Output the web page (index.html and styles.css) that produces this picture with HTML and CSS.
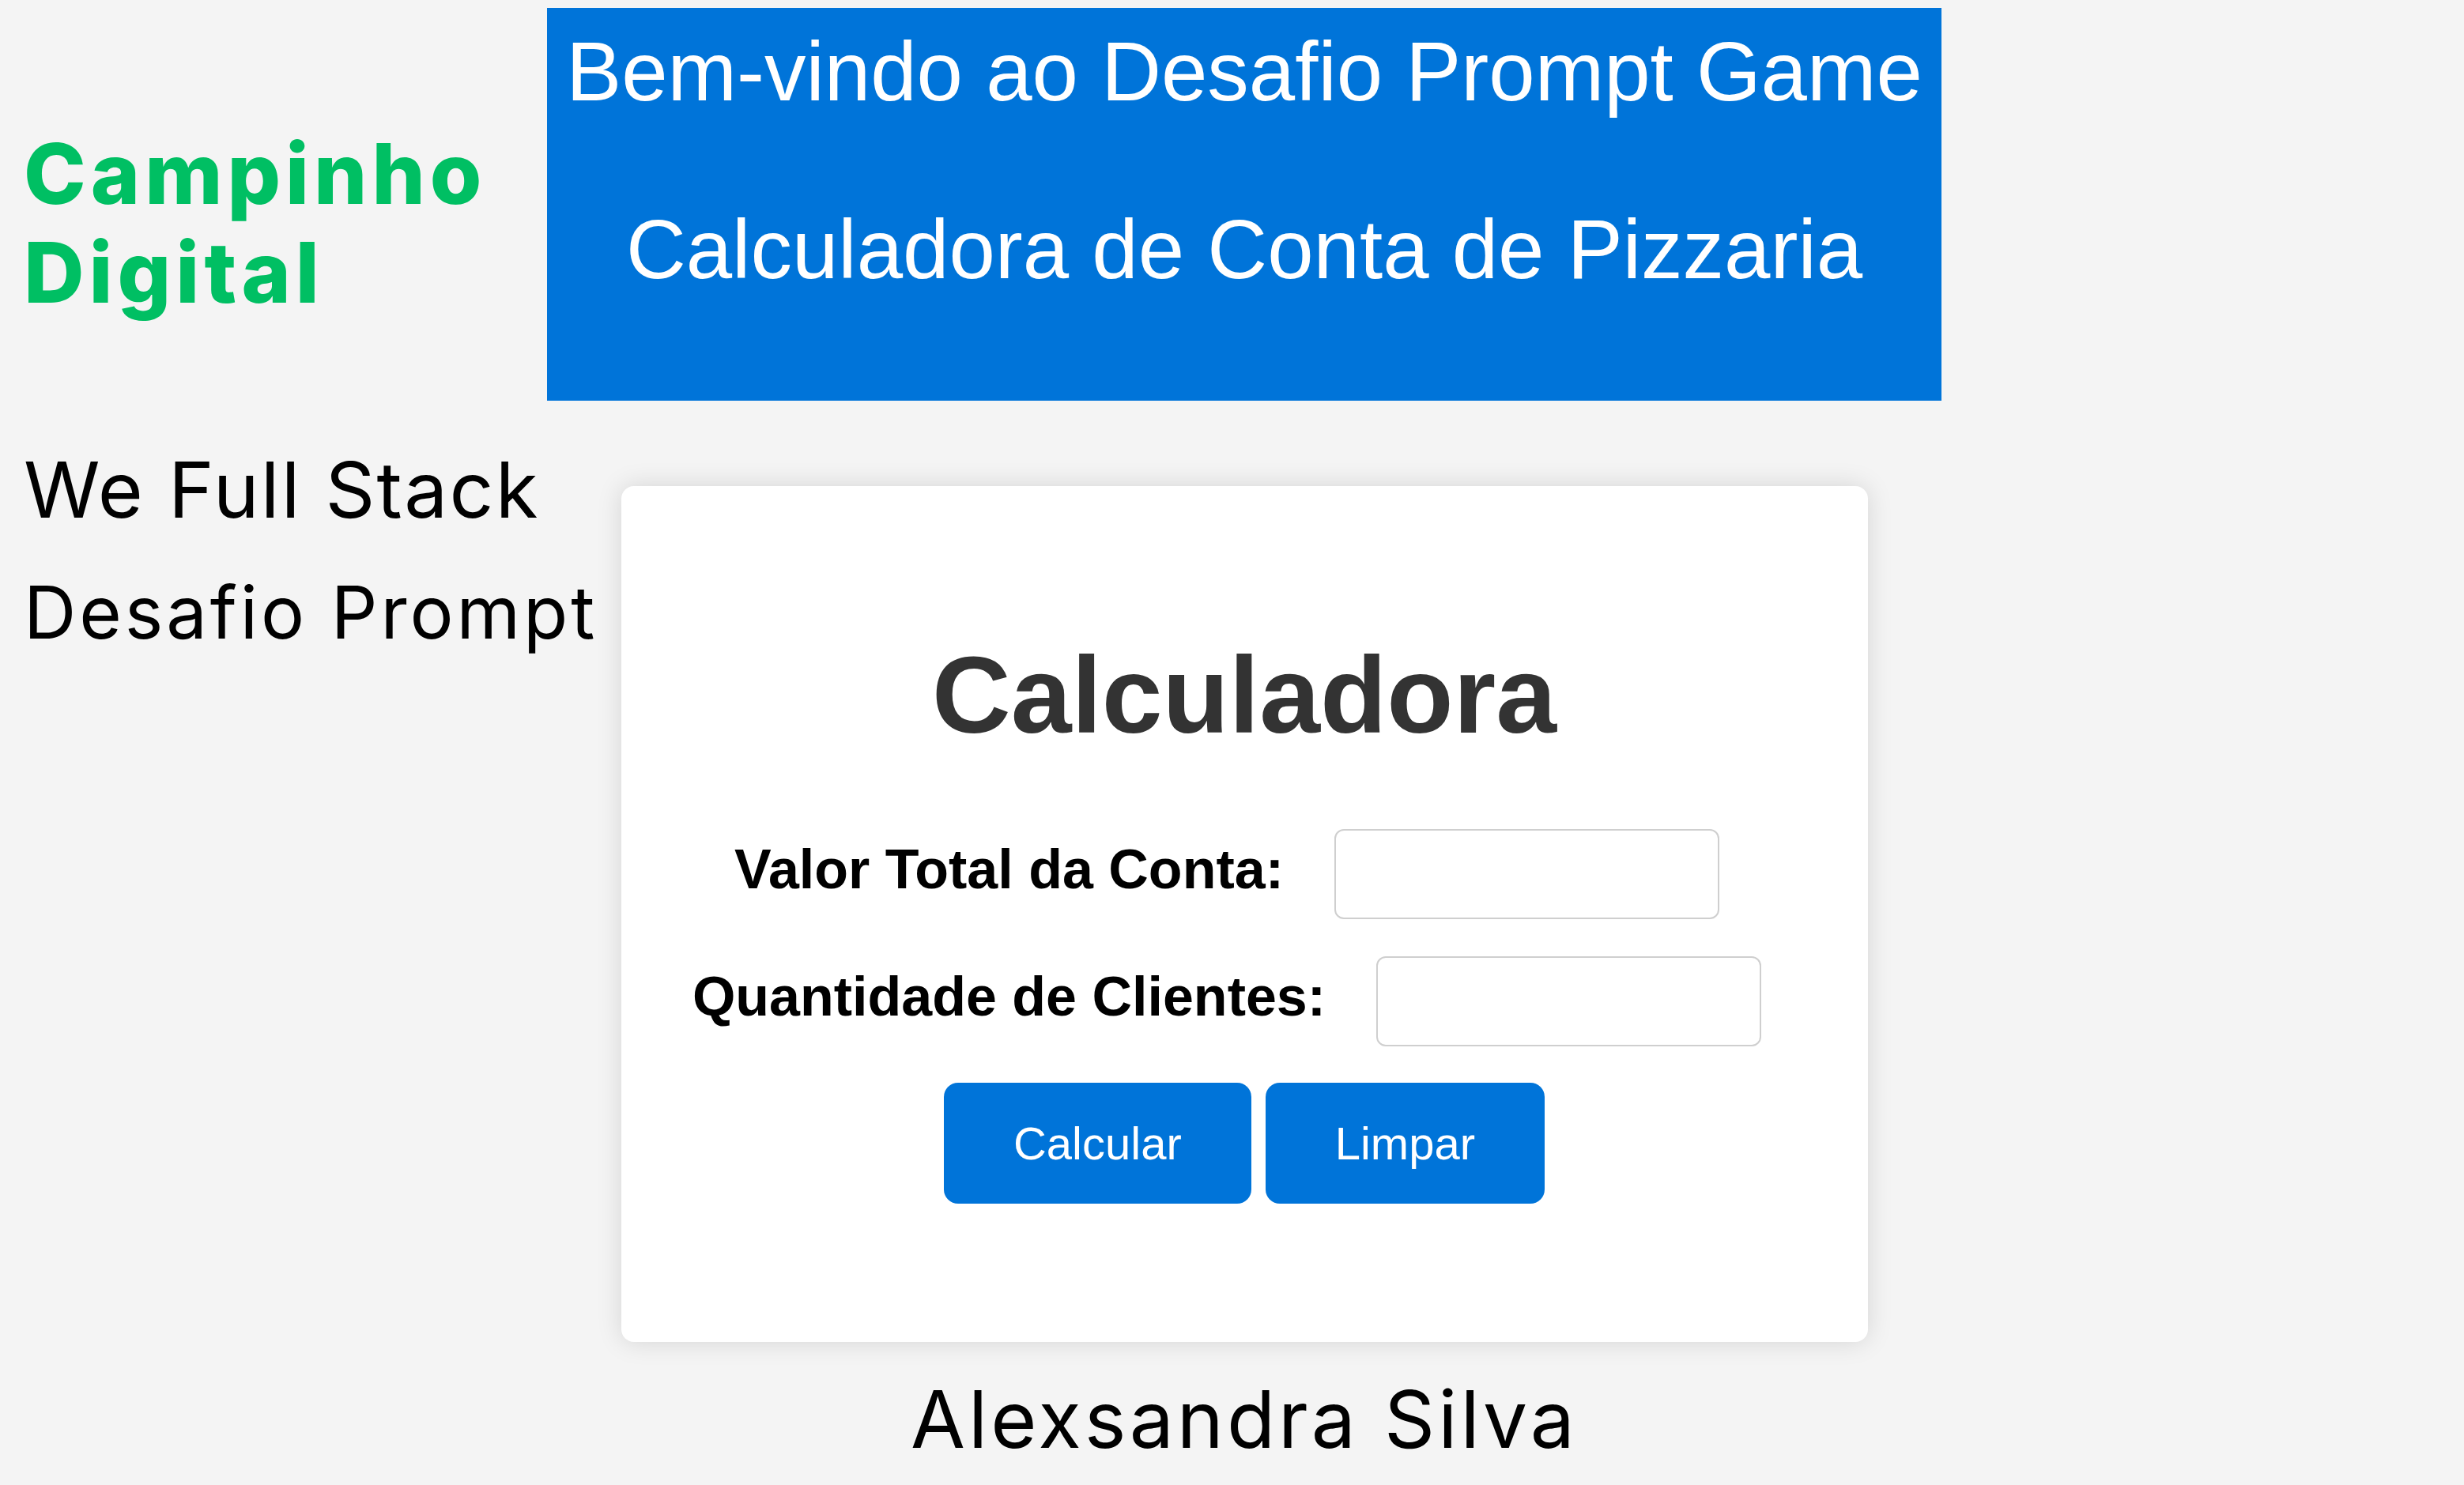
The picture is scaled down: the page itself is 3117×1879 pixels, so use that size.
FILE: index.html
```html
<!DOCTYPE html>
<html lang="pt-BR">
<head>
<meta charset="utf-8">
<title>Calculadora de Conta de Pizzaria</title>
<link rel="stylesheet" href="styles.css">
</head>
<body>
<div class="page">
  <div class="brand">
    <div class="brand-line">Campinho</div>
    <div class="brand-line">Digital</div>
  </div>

  <header class="banner">
    <h1 class="banner-title">Bem-vindo ao Desafio Prompt Game</h1>
    <h2 class="banner-title banner-sub">Calculadora de Conta de Pizzaria</h2>
  </header>

  <div class="taglines">
    <p class="tag tag-one">We Full Stack</p>
    <p class="tag tag-two">Desafio Prompt</p>
  </div>

  <main class="main">
    <section class="card">
      <h2 class="card-title">Calculadora</h2>
      <div class="field">
        <label class="field-label" for="total">Valor Total da Conta:</label>
        <input class="field-input" id="total" type="text">
      </div>
      <div class="field">
        <label class="field-label" for="clientes">Quantidade de Clientes:</label>
        <input class="field-input" id="clientes" type="text">
      </div>
      <div class="actions">
        <button class="btn" type="button">Calcular</button>
        <button class="btn" type="button">Limpar</button>
      </div>
    </section>
    <p class="author">Alexsandra Silva</p>
  </main>
</div>
</body>
</html>
```

FILE: styles.css
```css
html, body {
  margin: 0;
  padding: 0;
}

body {
  background: #f4f4f4;
  width: 3117px;
  height: 1879px;
  overflow: hidden;
}

.page {
  display: grid;
  grid-template-columns: 692px 1764px;
  grid-template-rows: 497px auto;
  padding-top: 10px;
}

/* Left column */
.brand {
  padding-left: 30px;
  padding-top: 147px;
  font-family: Inter, "Open Sans", sans-serif;
  font-weight: 800;
  font-size: 106px;
  line-height: 125px;
  color: #00bf63;
  letter-spacing: 6px;
  white-space: nowrap;
}

.taglines {
  padding-left: 30px;
  padding-top: 64px;
  font-family: Inter, "Open Sans", sans-serif;
  color: #000;
  white-space: nowrap;
}

.tag {
  margin: 0;
  line-height: 1;
  font-weight: 400;
}

.tag-one {
  font-size: 98px;
  letter-spacing: 2.2px;
}

.tag-two {
  font-size: 92px;
  margin-top: 60px;
  letter-spacing: 3.9px;
}

/* Banner */
.banner {
  background: #0074d9;
  color: #fff;
  font-family: "Liberation Sans", Arial, sans-serif;
  padding: 28px 0 0;
  box-sizing: border-box;
  height: 497px;
  text-align: center;
}

.banner-title {
  margin: 0;
  font-size: 105px;
  font-weight: 400;
  line-height: 1;
  white-space: nowrap;
}

.banner-sub {
  margin-top: 120px;
}

/* Main column */
.main {
  display: flex;
  flex-direction: column;
  align-items: center;
}

.card {
  margin-top: 108px;
  width: 1577px;
  height: 1083px;
  box-sizing: border-box;
  background: #fff;
  border-radius: 16px;
  box-shadow: 0 0 32px rgba(0, 0, 0, 0.13);
  padding-top: 195px;
  display: flex;
  flex-direction: column;
  align-items: center;
  font-family: "Liberation Sans", Arial, sans-serif;
}

.card-title {
  margin: 0;
  font-size: 138px;
  font-weight: 700;
  line-height: 1;
  color: #333;
}

.field {
  display: flex;
  align-items: center;
  justify-content: center;
  gap: 64px;
  padding-right: 44px;
  margin-top: 47px;
}

.card-title + .field {
  margin-top: 101px;
}

.field-label {
  font-size: 70px;
  font-weight: 700;
  line-height: 1;
  color: #000;
  margin-bottom: 12px;
  white-space: nowrap;
}

.field-input {
  width: 487px;
  height: 114px;
  box-sizing: border-box;
  border: 2px solid #cfcfcf;
  border-radius: 12px;
  background: #fff;
  margin: 0;
  padding: 0 16px;
  font-size: 48px;
}

.actions {
  display: flex;
  gap: 18px;
  margin-top: 46px;
}

.btn {
  height: 153px;
  padding: 0 88px;
  border: none;
  border-radius: 18px;
  background: #0074d9;
  color: #fff;
  font-family: "Liberation Sans", Arial, sans-serif;
  font-size: 58px;
  line-height: 1;
  cursor: pointer;
}

.author {
  margin: 48px 0 0;
  font-family: Inter, "Open Sans", sans-serif;
  font-size: 100px;
  font-weight: 400;
  line-height: 1;
  color: #000;
  letter-spacing: 4px;
  white-space: nowrap;
}
```
